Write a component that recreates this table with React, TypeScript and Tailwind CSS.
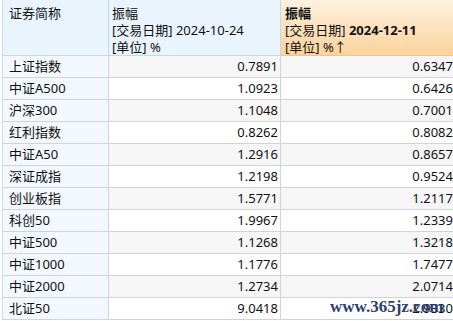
import React from "react";

const rows: [string, string, string][] = [
  ["上证指数", "0.7891", "0.6347"],
  ["中证A500", "1.0923", "0.6426"],
  ["沪深300", "1.1048", "0.7001"],
  ["红利指数", "0.8262", "0.8082"],
  ["中证A50", "1.2916", "0.8657"],
  ["深证成指", "1.2198", "0.9524"],
  ["创业板指", "1.5771", "1.2117"],
  ["科创50", "1.9967", "1.2339"],
  ["中证500", "1.1268", "1.3218"],
  ["中证1000", "1.1776", "1.7477"],
  ["中证2000", "1.2734", "2.0714"],
  ["北证50", "9.0418", "2.9330"],
];

const font = { fontFamily: '"Noto Sans", "Noto Sans CJK SC", sans-serif' };

export default function App() {
  return (
    <div
      className="relative w-[453px] h-[321px] overflow-hidden bg-white text-[13px] text-[#111] leading-none"
      style={font}
    >
      <div className="grid grid-cols-[106px_172px_175px] ml-[2px] border-l border-[#c9dcf0]">
        {/* header */}
        <div className="h-[56px] bg-[#eaf4fd] border-r border-b border-[#c4d8ef] pl-[6px] pt-[5px]">
          <div className="leading-[17px]">证券简称</div>
        </div>
        <div className="h-[56px] bg-[#eaf4fd] border-r border-b border-[#c4d8ef] pl-[3px] pt-[5px]">
          <div className="leading-[17px]">振幅</div>
          <div className="leading-[17px]">[交易日期] 2024-10-24</div>
          <div className="leading-[17px]">[单位] %</div>
        </div>
        <div className="h-[56px] bg-gradient-to-b from-[#fdf1e0] to-[#fbd39b] border-b border-[#f6c47c] pl-[4px] pt-[5px]">
          <div className="leading-[17px] font-bold">振幅</div>
          <div className="leading-[17px]">
            [交易日期] <span className="font-bold">2024-12-11</span>
          </div>
          <div className="leading-[17px]">[单位] %↑</div>
        </div>
        {rows.map(([name, a, b], i) => {
          const odd = i % 2 === 0;
          return (
            <React.Fragment key={name}>
              <div className="h-[22px] bg-[#f2f8fe] border-r border-b border-[#d3d3d3] pl-[6px] flex items-center">
                {name}
              </div>
              <div
                className={`h-[22px] border-r border-b border-[#d3d3d3] pr-[2px] flex items-center justify-end ${
                  odd ? "bg-[#f6f6f6]" : "bg-white"
                }`}
              >
                {a}
              </div>
              <div
                className={`h-[22px] border-b border-[#d3d3d3] pr-[3px] flex items-center justify-end ${
                  odd ? "bg-[#f6f6f6]" : "bg-white"
                }`}
              >
                {b}
              </div>
            </React.Fragment>
          );
        })}
      </div>
      <div
        className="absolute left-[330px] top-[298px] text-[17px] font-bold text-[#2c3f72]"
        style={{ fontFamily: '"Liberation Serif", serif' }}
      >
        www.365jz.com
      </div>
    </div>
  );
}
